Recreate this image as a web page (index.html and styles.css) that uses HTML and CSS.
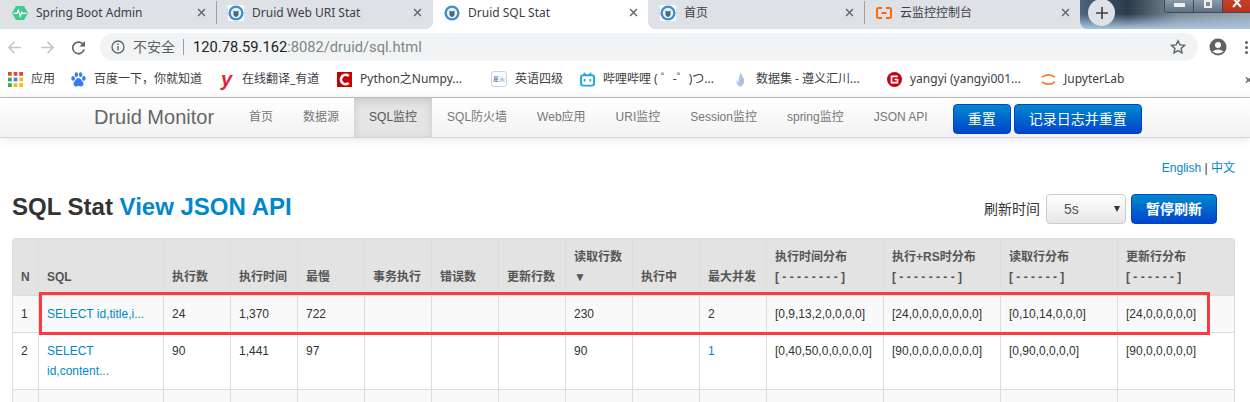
FILE: index.html
```html
<!DOCTYPE html>
<html lang="zh-CN">
<head>
    <meta charset="UTF-8">
    <title>Druid SQL Stat</title>
    <link rel="stylesheet" href="styles.css">
</head>
<body>
    <svg class="defs" width="0" height="0">
        <symbol id="druid" viewBox="0 0 16 16">
            <rect width="16" height="16" fill="#fff"/>
            <circle cx="8" cy="8" r="7.6" fill="#3d90cb"/>
            <circle cx="8" cy="8" r="5.2" fill="#e8f1f6"/>
            <path d="M5.500 5.500l1.200.8h2.600l1.200-.8v4.500l-1.400 1.800H6.900l-1.400-1.800z" fill="#4f6675"/>
        </symbol>
        <symbol id="close" viewBox="0 0 10 10">
            <path d="M1.200 1.200l7.600 7.600M8.800 1.200l-7.600 7.600" stroke="#5f6368" stroke-width="1.500" fill="none"/>
        </symbol>
    </svg>

    <div class="tabbar">
        <div class="tab">
            <svg class="tab-icon" viewBox="0 0 16 16"><path d="M4 1h8l4 7-4 7H4L0 8z" fill="#3fcb8e"/><path d="M1.500 8.300h3.500l1.300-3 2 6 1.500-4 .8 1h4" stroke="#fff" stroke-width="1.200" fill="none"/></svg>
            <span class="tab-title">Spring Boot Admin</span>
            <svg class="tab-close"><use href="#close"/></svg>
        </div>
        <div class="tab tab-sep">
            <svg class="tab-icon"><use href="#druid"/></svg>
            <span class="tab-title">Druid Web URI Stat</span>
            <svg class="tab-close"><use href="#close"/></svg>
        </div>
        <div class="tab tab-active">
            <svg class="tab-icon"><use href="#druid"/></svg>
            <span class="tab-title">Druid SQL Stat</span>
            <svg class="tab-close"><use href="#close"/></svg>
        </div>
        <div class="tab">
            <svg class="tab-icon"><use href="#druid"/></svg>
            <span class="tab-title">首页</span>
            <svg class="tab-close"><use href="#close"/></svg>
        </div>
        <div class="tab tab-sep">
            <svg class="tab-icon" viewBox="0 0 16 16"><path d="M6 3H2.500Q1 3 1 4.500v7Q1 13 2.500 13H6M10 3h3.500Q15 3 15 4.500v7q0 1.500-1.500 1.500H10M5.500 8h5" stroke="#ff6a00" stroke-width="2" fill="none"/></svg>
            <span class="tab-title">云监控控制台</span>
            <svg class="tab-close"><use href="#close"/></svg>
        </div>
        <div class="desktop">
            <div class="newtab">
                <svg width="12" height="12" viewBox="0 0 12 12"><path d="M6 0v12M0 6h12" stroke="#3c4043" stroke-width="1.600"/></svg>
            </div>
            <div class="winctl">
                <span class="winbtn"><i class="win-min"></i></span>
                <span class="winbtn"><i class="win-max"></i></span>
                <span class="winbtn winbtn-close">
                    <svg width="10" height="8" viewBox="0 0 10 8"><path d="M1-2l8 9M9-2L1 7" stroke="#fff" stroke-width="2"/></svg>
                </span>
            </div>
        </div>
    </div>

    <div class="toolbar">
        <svg class="nav-arrow" viewBox="0 0 16 16"><path d="M15 8H2M8 2L2 8l6 6" stroke="#c4c7cb" stroke-width="1.800" fill="none"/></svg>
        <svg class="nav-arrow" viewBox="0 0 16 16"><path d="M1 8h13M8 2l6 6-6 6" stroke="#c4c7cb" stroke-width="1.800" fill="none"/></svg>
        <svg class="nav-arrow" viewBox="0 0 16 16"><path d="M13.500 5.500A6.200 6.200 0 1 0 14 10" stroke="#5f6368" stroke-width="1.800" fill="none"/><path d="M15 1v6H9z" fill="#5f6368"/></svg>
        <div class="omnibox">
            <svg class="info" viewBox="0 0 14 14"><circle cx="7" cy="7" r="6" stroke="#5f6368" stroke-width="1.300" fill="none"/><path d="M7 6v4.500M7 3.500v1.400" stroke="#5f6368" stroke-width="1.400"/></svg>
            <span class="insecure">不安全</span>
            <span class="url"><b>120.78.59.162</b>:8082/druid/sql.html</span>
            <svg class="star" viewBox="0 0 16 16"><path d="M8 1.800l1.900 4.100 4.500.5-3.300 3 .9 4.400L8 11.600l-4 2.200.9-4.400-3.300-3 4.500-.5z" stroke="#5f6368" stroke-width="1.400" fill="none"/></svg>
        </div>
        <svg class="avatar" viewBox="0 0 18 18"><circle cx="9" cy="9" r="8.500" fill="#5f6368"/><circle cx="9" cy="7" r="3" fill="#fff"/><path d="M3.500 13.500Q9 9.500 14.500 13.500 9 17.500 3.500 13.500z" fill="#fff"/></svg>
        <span class="dots"><i></i><i></i><i></i></span>
    </div>

    <div class="bookmarks">
        <div class="bm">
            <svg class="bm-icon" viewBox="0 0 12 12"><path d="M0 0h3v3H0z" fill="#ea4335"/><path d="M4.500 0h3v3h-3z" fill="#ea4335"/><path d="M9 0h3v3H9z" fill="#ea4335"/><path d="M0 4.500h3v3H0z" fill="#34a853"/><path d="M4.500 4.500h3v3h-3z" fill="#4285f4"/><path d="M9 4.500h3v3H9z" fill="#fbbc05"/><path d="M0 9h3v3H0z" fill="#34a853"/><path d="M4.500 9h3v3h-3z" fill="#fbbc05"/><path d="M9 9h3v3H9z" fill="#fbbc05"/></svg>
            <span>应用</span>
        </div>
        <div class="bm">
            <svg class="bm-icon" viewBox="0 0 14 14"><g fill="#3b7cf0"><ellipse cx="2" cy="6" rx="1.700" ry="2.200"/><ellipse cx="5" cy="2.500" rx="1.600" ry="2.200"/><ellipse cx="9" cy="2.500" rx="1.600" ry="2.200"/><ellipse cx="12" cy="6" rx="1.700" ry="2.200"/><path d="M7 5.500c2 0 2.500 2 4 3.500s.5 4.500-2 4.500c-1 0-1.200-.4-2-.4s-1 .4-2 .4c-2.500 0-3.500-3-2-4.500S5 5.500 7 5.500z"/></g></svg>
            <span>百度一下，你就知道</span>
        </div>
        <div class="bm">
            <span class="bm-icon youdao">y</span>
            <span>在线翻译_有道</span>
        </div>
        <div class="bm">
            <svg class="bm-icon" viewBox="0 0 16 16"><rect width="16" height="16" fill="#c70000"/><path d="M12.500 4.200A5 5 0 1 0 12.500 11.800" stroke="#fff" stroke-width="2.800" fill="none"/></svg>
            <span>Python之Numpy...</span>
        </div>
        <div class="bm">
            <span class="bm-icon star-fire">星火</span>
            <span>英语四级</span>
        </div>
        <div class="bm">
            <svg class="bm-icon" viewBox="0 0 16 16"><rect x="1" y="3.500" width="14" height="11" rx="2.500" stroke="#1fa8dd" stroke-width="2" fill="none"/><path d="M4 .8l2.500 2.700M12 .8L9.500 3.500" stroke="#1fa8dd" stroke-width="1.600"/><path d="M5 7.500v2.500M11 7.500v2.500" stroke="#1fa8dd" stroke-width="1.800"/></svg>
            <span>哔哩哔哩 ( ゜-゜)つ...</span>
        </div>
        <div class="bm">
            <svg class="bm-icon bm-icon-thin" viewBox="0 0 12 16"><path d="M6 0C7 4 10 5 10 9s-2 6-4 7C3 15 1 12 2 8c.5 2 1.500 2.500 2 3C3.500 7 5 4 6 0z" fill="#a9c7ef"/><path d="M7 6c1 2 2 4 0 8l-1-3z" fill="#c9a6df"/></svg>
            <span>数据集 - 遵义汇川...</span>
        </div>
        <div class="bm">
            <svg class="bm-icon" viewBox="0 0 16 16"><circle cx="8" cy="8" r="8" fill="#c9000f"/><path d="M11.500 4.700H4.800v6.600h6.400V8H8" stroke="#fff" stroke-width="1.800" fill="none"/></svg>
            <span>yangyi (yangyi001...</span>
        </div>
        <div class="bm">
            <svg class="bm-icon" viewBox="0 0 16 16"><path d="M1 5.500Q8 .500 15 5.500M1 10.500Q8 15.500 15 10.500" stroke="#f37726" stroke-width="1.700" fill="none"/></svg>
            <span>JupyterLab</span>
        </div>
        <svg class="bm-more" viewBox="0 0 8 8"><path d="M1 1.500l5 5M6 1.500l-5 5" stroke="#5f6368" stroke-width="1.300"/></svg>
    </div>

    <div class="navbar">
        <a class="brand">Druid Monitor</a>
        <ul class="nav">
            <li>首页</li>
            <li>数据源</li>
            <li class="active">SQL监控</li>
            <li>SQL防火墙</li>
            <li>Web应用</li>
            <li>URI监控</li>
            <li>Session监控</li>
            <li>spring监控</li>
            <li>JSON API</li>
        </ul>
        <div class="nav-btns">
            <button class="btn">重置</button>
            <button class="btn">记录日志并重置</button>
        </div>
    </div>

    <div class="container">
        <div class="lang"><a>English</a> | <a>中文</a></div>

        <div class="heading">
            <h3>SQL Stat <a>View JSON API</a></h3>
            <div class="refresh">
                <span class="refresh-label">刷新时间</span>
                <div class="select">
                    <select>
                        <option>5s</option>
                    </select>
                </div>
                <button class="btn btn-bold">暂停刷新</button>
            </div>
        </div>

        <div class="table-wrap">
            <table class="stat">
                <colgroup>
                    <col class="c-n"><col class="c-sql">
                    <col class="c-num"><col class="c-num"><col class="c-num"><col class="c-num"><col class="c-num"><col class="c-num"><col class="c-num"><col class="c-num"><col class="c-num">
                    <col class="c-hist"><col class="c-hist"><col class="c-hist"><col class="c-last">
                </colgroup>
                <thead>
                    <tr>
                        <th>N</th>
                        <th>SQL</th>
                        <th>执行数</th>
                        <th>执行时间</th>
                        <th>最慢</th>
                        <th>事务执行</th>
                        <th>错误数</th>
                        <th>更新行数</th>
                        <th>读取行数<br>▼</th>
                        <th>执行中</th>
                        <th>最大并发</th>
                        <th>执行时间分布<br>[ - - - - - - - - ]</th>
                        <th>执行+RS时分布<br>[ - - - - - - - - ]</th>
                        <th>读取行分布<br>[ - - - - - - ]</th>
                        <th>更新行分布<br>[ - - - - - - ]</th>
                    </tr>
                </thead>
                <tbody>
                    <tr>
                        <td>1</td>
                        <td><a>SELECT id,title,i...</a></td>
                        <td>24</td>
                        <td>1,370</td>
                        <td>722</td>
                        <td></td>
                        <td></td>
                        <td></td>
                        <td>230</td>
                        <td></td>
                        <td>2</td>
                        <td>[0,9,13,2,0,0,0,0]</td>
                        <td>[24,0,0,0,0,0,0,0]</td>
                        <td>[0,10,14,0,0,0]</td>
                        <td>[24,0,0,0,0,0]</td>
                    </tr>
                    <tr>
                        <td>2</td>
                        <td><a>SELECT id,content...</a></td>
                        <td>90</td>
                        <td>1,441</td>
                        <td>97</td>
                        <td></td>
                        <td></td>
                        <td></td>
                        <td>90</td>
                        <td></td>
                        <td><a>1</a></td>
                        <td>[0,40,50,0,0,0,0,0]</td>
                        <td>[90,0,0,0,0,0,0,0]</td>
                        <td>[0,90,0,0,0,0]</td>
                        <td>[90,0,0,0,0,0]</td>
                    </tr>
                    <tr>
                        <td>&nbsp;</td><td></td><td></td><td></td><td></td><td></td><td></td><td></td><td></td><td></td><td></td><td></td><td></td><td></td><td></td>
                    </tr>
                </tbody>
            </table>
            <div class="highlight"></div>
        </div>
    </div>
</body>
</html>
```

FILE: styles.css
```css
html, body {
    height: 402px;
    overflow: hidden;
}
body {
    margin: 0;
    background: #fff;
    font-family: "Liberation Sans", "Noto Sans CJK SC", sans-serif;
    font-size: 12px;
    line-height: 20px;
    color: #333;
}
.defs {
    position: absolute;
}

/* browser tabs */
.tabbar {
    display: flex;
    height: 29px;
    background: #dee1e6;
    font-family: "Noto Sans", "Noto Sans CJK SC", sans-serif;
    color: #3c4043;
}
.tab {
    display: flex;
    align-items: center;
    box-sizing: border-box;
    width: 216px;
    height: 25px;
    padding: 0 10px 0 12px;
    position: relative;
}
.tab-sep {
    border-left: 1px solid #9da0a5;
    height: 23px;
    margin-top: 1px;
    padding-left: 11px;
}
.tab-active {
    height: 29px;
    width: 215px;
    margin-left: 1px;
    padding: 0 10px 4px 11px;
    background: #fff;
}
.tab-active::before, .tab-active::after {
    content: "";
    position: absolute;
    bottom: 0;
    width: 8px;
    height: 8px;
}
.tab-active::before {
    left: -8px;
    background: radial-gradient(circle at 0 0, transparent 8px, #fff 8px);
}
.tab-active::after {
    right: -8px;
    background: radial-gradient(circle at 100% 0, transparent 8px, #fff 8px);
}
.tab-icon {
    width: 16px;
    height: 16px;
    flex: none;
}
.tab-title {
    flex: 1;
    margin-left: 8px;
}
.tab-close {
    width: 9px;
    height: 9px;
    flex: none;
}
.desktop {
    flex: 1;
    display: flex;
    justify-content: space-between;
    border-bottom-left-radius: 8px;
    background:
        linear-gradient(to bottom, rgba(170, 200, 228, 0) 14px, #a9c6e0 29px),
        linear-gradient(to right, #4a6580 0, #2b3a48 48px, #7d8d98 98px, #9aa5ad 168px);
}
.newtab {
    display: flex;
    align-items: center;
    justify-content: center;
    width: 27px;
    height: 27px;
    margin-left: 8px;
    border-radius: 50%;
    background: #dee1e6;
    transform: translateY(-1px);
}
.winctl {
    display: flex;
    height: 12px;
    border: 1px solid #3c4a58;
    border-top: 0;
    border-radius: 0 0 4px 4px;
    margin-right: -3px;
    overflow: hidden;
}
.winbtn {
    display: flex;
    justify-content: center;
    width: 28px;
    border-right: 1px solid #3c4a58;
    background: linear-gradient(#8a9aa8, #5f7184);
}
.win-min {
    display: block;
    width: 11px;
    height: 4px;
    margin-top: 3px;
    background: #eee;
}
.win-max {
    display: block;
    box-sizing: border-box;
    width: 8px;
    height: 8px;
    border: 2px solid #eee;
}
.winbtn-close {
    background: linear-gradient(#c9402a, #b5321f);
}

/* address bar */
.toolbar {
    display: flex;
    align-items: center;
    height: 32px;
    padding: 4px 0 0 7px;
    box-sizing: border-box;
}
.nav-arrow {
    width: 15px;
    height: 15px;
    margin-right: 18px;
    flex: none;
}
.nav-arrow:nth-child(2) {
    margin-right: 16px;
}
.nav-arrow:nth-child(3) {
    margin-right: 14px;
}
.omnibox {
    display: flex;
    align-items: center;
    width: 1098px;
    height: 28px;
    box-sizing: border-box;
    padding: 0 12px 0 11px;
    border-radius: 14px;
    background: #f1f3f4;
    color: #5f6368;
    font-family: "Noto Sans", "Noto Sans CJK SC", sans-serif;
}
.info {
    width: 14px;
    height: 14px;
}
.insecure {
    font-size: 14px;
    margin-left: 8px;
    padding-right: 8px;
    border-right: 1px solid #9aa0a6;
    line-height: 16px;
}
.url {
    flex: 1;
    margin-left: 9px;
    font-size: 14.700px;
    color: #80868b;
    font-family: Roboto, sans-serif;
}
.url b {
    font-weight: normal;
    color: #202124;
}
.star {
    width: 16px;
    height: 16px;
}
.avatar {
    width: 18px;
    height: 18px;
    margin-left: 11px;
    flex: none;
}
.dots {
    display: flex;
    flex-direction: column;
    gap: 2px;
    margin-left: 18px;
}
.dots i {
    width: 3px;
    height: 3px;
    background: #5f6368;
    border-radius: 50%;
}

/* bookmarks */
.bookmarks {
    display: grid;
    grid-template-columns: 63px 150px 116px 154px 89px 155px 152px 154px 1fr;
    align-items: center;
    height: 36px;
    padding-left: 8px;
    border-bottom: 1px solid #b8b8b8;
    font-family: "Noto Sans", "Noto Sans CJK SC", sans-serif;
    color: #3c4043;
    position: relative;
}
.bm {
    display: flex;
    align-items: center;
    gap: 8px;
    white-space: nowrap;
}
.bm-icon {
    width: 15px;
    height: 15px;
    flex: none;
}
.youdao {
    width: 12px;
    margin-right: 1px;
    color: #e5202e;
    font: italic bold 20px/15px "Liberation Sans", sans-serif;
}
.star-fire {
    box-sizing: border-box;
    width: 16px;
    height: 16px;
    border: 1px solid #c5d6ec;
    border-radius: 3px;
    color: #3a6fb5;
    font-size: 6px;
    line-height: 14px;
    text-align: center;
}
.bm-icon-thin {
    width: 11px;
    margin: 0 2px 0 0;
}
.bm-more {
    position: absolute;
    right: -3px;
    top: 15px;
    width: 8px;
    height: 8px;
}

/* druid nav */
.navbar {
    display: flex;
    align-items: stretch;
    box-sizing: border-box;
    height: 40px;
    padding-left: 94px;
    background: linear-gradient(#fff, #f2f2f2);
    border-bottom: 1px solid #d4d4d4;
    box-shadow: 0 1px 10px rgba(0, 0, 0, .1);
}
.brand {
    font-size: 20px;
    line-height: 39px;
    color: #666;
    margin-right: 20px;
}
.nav {
    display: flex;
    list-style: none;
    margin: 0;
    padding: 0;
}
.nav li {
    padding: 0 15px;
    line-height: 39px;
    color: #777;
}
.nav li.active {
    color: #555;
    background: #e5e5e5;
    box-shadow: inset 0 3px 8px rgba(0, 0, 0, .125);
}
.nav-btns {
    display: flex;
    gap: 3px;
    margin: 6px 0 0 10px;
    height: 30px;
}
.btn {
    height: 30px;
    padding: 0 14px;
    border: 1px solid #0044cc;
    border-radius: 4px;
    background: linear-gradient(#0088cc, #0044cc);
    color: #fff;
    font: 14px/20px "Liberation Sans", "Noto Sans CJK SC", sans-serif;
}
.btn-bold {
    font-weight: bold;
}

/* content */
.container {
    padding: 20px 15px 0 12px;
}
.lang {
    text-align: right;
}
.lang a, .stat a, h3 a {
    color: #0088cc;
}
.heading {
    display: flex;
    align-items: center;
    height: 30px;
    margin: 16px 0 14px;
}
h3 {
    margin: 0;
    font-size: 24px;
    line-height: 30px;
    color: #333;
    transform: translateY(-2px);
}
.refresh {
    display: flex;
    align-items: center;
    margin-left: auto;
    margin-right: 18px;
}
.refresh-label {
    font-size: 14px;
    margin-right: 6px;
}
.select {
    position: relative;
    margin-right: 5px;
}
.select::after {
    content: "";
    position: absolute;
    right: 6px;
    top: 12px;
    border: 3px solid transparent;
    border-top: 6px solid #333;
    border-bottom: 0;
}
.select select {
    display: block;
    appearance: none;
    width: 80px;
    height: 30px;
    padding: 0 0 0 17px;
    border: 1px solid #ccc;
    border-radius: 4px;
    background: linear-gradient(#fff, #e6e6e6);
    color: #555;
    font: 14px "Liberation Sans", sans-serif;
}

/* sql table */
.table-wrap {
    position: relative;
    height: 164px;
    overflow: hidden;
}
.stat {
    table-layout: fixed;
    width: 1223px;
    border-collapse: separate;
    border-spacing: 0;
    border: 1px solid #ddd;
    border-left: 0;
    border-radius: 4px 4px 0 0;
}
.c-n { width: 26px; }
.c-sql { width: 125px; }
.c-num { width: 67px; }
.c-hist { width: 117px; }
.c-last { width: 117px; }
.stat th, .stat td {
    padding: 8px;
    border-left: 1px solid #ddd;
    border-top: 1px solid #ddd;
    text-align: left;
    vertical-align: top;
}
.stat th {
    background: #e3e3e3;
    border-top: 0;
    font-weight: bold;
    color: #555;
    vertical-align: bottom;
}
.stat th:first-child {
    border-top-left-radius: 4px;
}
.stat tbody tr:nth-child(odd) td {
    background: #f9f9f9;
}
.highlight {
    position: absolute;
    left: 27px;
    top: 54px;
    width: 1171px;
    height: 43px;
    box-sizing: border-box;
    border: 3px solid #f93a3f;
}
```
